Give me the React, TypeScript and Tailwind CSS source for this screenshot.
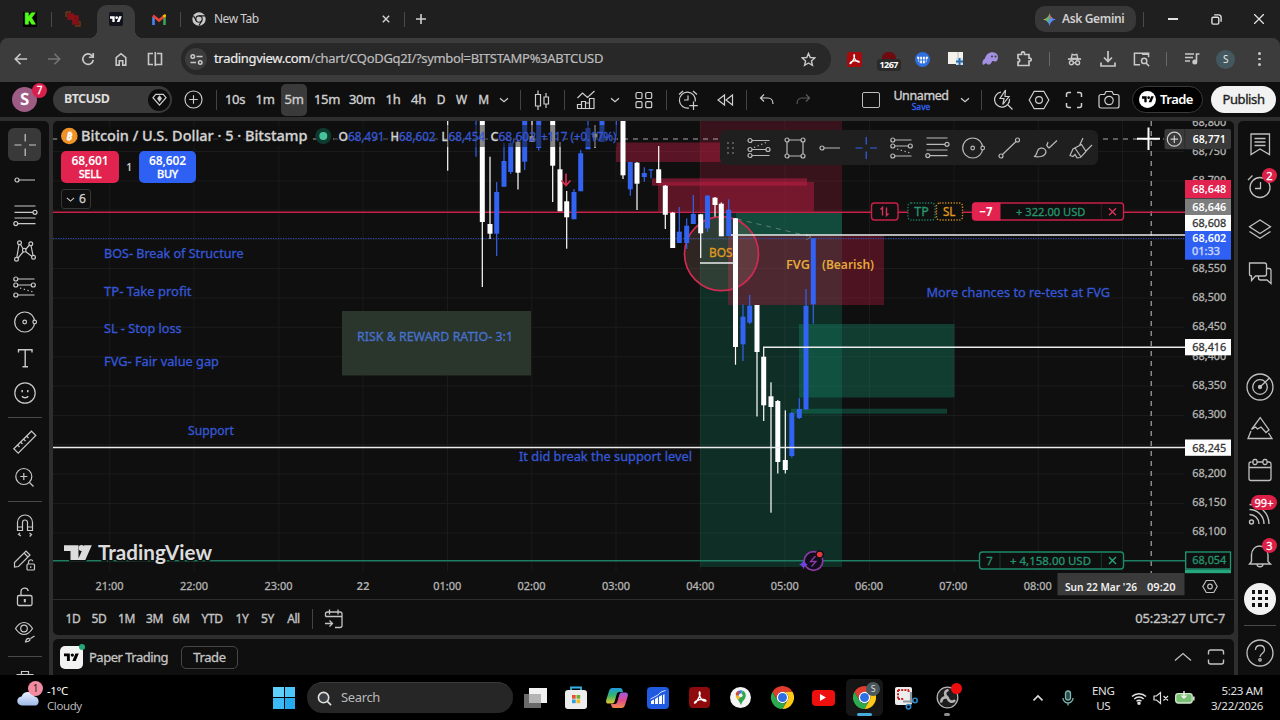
import React from 'react';

const UI = 'font-["Noto_Sans","Open_Sans",sans-serif]';

// [x, bodyTop, bodyBottom, wickTop, wickBottom, up]
const candles: [number, number, number, number, number, number][] = [
    [447.7, 121, 121, 121, 170.7, 0],
    [476, 121, 121, 121, 156.7, 1],
    [482.3, 121, 222, 121, 287, 0],
    [490, 224, 233.7, 156.7, 239, 0],
    [496.7, 192, 233.7, 182, 256, 1],
    [504, 161, 186.7, 143, 187, 1],
    [510.7, 143, 172, 140, 174, 1],
    [518, 141.7, 172.7, 140, 189.5, 0],
    [524.7, 121, 161.7, 121, 170, 1],
    [532, 136, 142, 121, 142, 0],
    [538.7, 121, 148, 121, 150.5, 1],
    [552.7, 121, 165.7, 121, 202, 0],
    [560, 169.3, 211.3, 142, 211, 0],
    [566.7, 201.3, 217.3, 191, 248.7, 0],
    [574, 192, 219.3, 189, 219, 1],
    [580.7, 153.3, 191.3, 150, 191, 1],
    [588, 128, 149.3, 121, 149, 1],
    [595, 133.5, 137.5, 125, 148, 0],
    [602, 121, 142, 121, 142, 1],
    [616.3, 121, 121, 121, 136, 1],
    [623, 121, 175.3, 121, 179, 0],
    [630.3, 162, 189.3, 162, 195.7, 1],
    [637, 162.7, 183.7, 162, 210, 0],
    [644.3, 173, 177, 167.3, 181.7, 1],
    [651, 169.3, 170.5, 169, 178.3, 1],
    [658.7, 169.3, 183, 146, 183, 0],
    [665.3, 185.7, 214.7, 185, 229, 0],
    [672.7, 212.7, 248, 212, 248, 0],
    [679.3, 231.7, 243, 207, 243, 1],
    [686.7, 225.7, 243, 218.3, 249, 1],
    [693.3, 214, 224, 195, 224, 1],
    [700.7, 214.3, 233.3, 214, 258, 0],
    [707.5, 195.7, 228.3, 195, 231.7, 1],
    [715, 197.7, 205, 197, 216.7, 0],
    [721.3, 203.7, 236.3, 202.5, 236, 0],
    [728.7, 209.7, 236, 199.3, 236, 1],
    [735.5, 218.3, 347, 218, 364.7, 0],
    [743, 316.7, 344.3, 304.5, 361, 1],
    [749.7, 305.7, 322.7, 295, 324, 1],
    [757, 305, 352, 305, 416.5, 0],
    [763.7, 356.7, 405.3, 347, 421, 0],
    [771, 396.3, 407, 382.3, 512.7, 0],
    [777.8, 401, 462, 400, 473.5, 0],
    [785.3, 460, 470, 410.3, 473.5, 0],
    [791.8, 413, 456, 412, 457.7, 1],
    [799.3, 409, 418, 398, 419, 1],
    [806, 305.8, 409.3, 289, 410, 1],
    [813.3, 238.3, 304.3, 238, 323.7, 1],
];

const gridX = [109.7, 194, 278.8, 363, 447.5, 531.7, 616, 700.3, 785, 869.5, 954, 1038.3, 1122.5];
const gridY = [151.5, 181, 210, 239.5, 268.5, 298, 327.3, 356.7, 386, 415.5, 444.7, 474, 503.5, 533];

const hours: [string, number][] = [
    ['21:00', 109.5], ['22:00', 194], ['23:00', 278.5], ['22', 363], ['01:00', 447.3], ['02:00', 531.5],
    ['03:00', 616], ['04:00', 700.3], ['05:00', 784.7], ['06:00', 869], ['07:00', 953.3], ['08:00', 1037.7],
];

const prices: [string, number][] = [
    ['68,800', 122], ['68,750', 151], ['68,700', 179.5], ['68,550', 268], ['68,500', 297], ['68,450', 326],
    ['68,400', 356], ['68,350', 385], ['68,300', 414], ['68,200', 473], ['68,150', 502], ['68,100', 531],
];

type IcoProps = { children: React.ReactNode; className?: string; box?: number; sw?: number };

const Ico = ({ children, className = 'size-7', box = 28, sw = 1.2 }: IcoProps) => (
    <svg viewBox={`0 0 ${box} ${box}`} className={`${className} shrink-0`} fill="none" stroke="currentColor" strokeWidth={sw}>
        {children}
    </svg>
);

const TvMark = ({ className = '' }: { className?: string }) => (
    <svg viewBox="0 3 36 20" className={className} fill="currentColor">
        <path d="M14 22H7V11H0V4h14v18zM28 22h-8l7.5-18h8L28 22z" />
        <circle cx="20" cy="8" r="4" />
    </svg>
);

const Slot = ({ w, children }: { w: string; children?: React.ReactNode }) => (
    <div className={`${w} shrink-0 flex items-center justify-center`}>{children}</div>
);

const Chevron = ({ className = 'size-[10px]' }: { className?: string }) => (
    <Ico box={10} className={className}><path d="M1 3.2l4 3.6 4-3.6" /></Ico>
);

const FibIcon = () => (
    <Ico>
        <path d="M3.5 4h21M3.5 10.3H22M3.5 16h21M7 21.6h17.5" />
        <circle cx="24" cy="10.3" r="2" />
        <circle cx="4.8" cy="21.6" r="2" />
    </Ico>
);

const ProjIcon = () => (
    <Ico>
        <path d="M7 6h16.5M7 12h13M7 22h16.5" />
        <circle cx="4.8" cy="6" r="2" />
        <circle cx="4.8" cy="12" r="2" />
        <circle cx="22.3" cy="12" r="2" />
        <circle cx="4.8" cy="22" r="2" />
        <path d="M9 15l15 4.500" strokeDasharray="1.3 2.6" />
    </Ico>
);

const CircleIcon = () => (
    <Ico>
        <circle cx="13.7" cy="14" r="10" />
        <circle cx="13.7" cy="14" r="1.8" />
        <circle cx="23.7" cy="14" r="1.8" fill="#151515" />
    </Ico>
);

const CrossIcon = () => (
    <Ico><path d="M3.5 14h7M18 14h7M14.2 3v7.5M14.2 17.5V25" /></Ico>
);

const RayIcon = () => (
    <Ico><circle cx="6" cy="14" r="2" /><path d="M8 14h16" /></Ico>
);

const Hexagon = ({ className = 'size-7' }: { className?: string }) => (
    <Ico className={className}>
        <path d="M9.2 5.3h9.6L23.8 14l-5 8.7H9.2L4.2 14z" />
        <circle cx="14" cy="14" r="3.4" />
    </Ico>
);

const ChromeLogo = ({ className = '' }: { className?: string }) => (
    <svg viewBox="0 0 48 48" className={className}>
        <path d="M24 12h20.78A24 24 0 0 0 3.22 12L13.6 30A12 12 0 0 1 24 12z" fill="#e33b2e" />
        <path d="M34.4 30L24 48A24 24 0 0 1 3.2 12l10.4 18a12 12 0 0 0 20.8 0z" fill="#2da94f" />
        <path d="M24 12h20.8A24 24 0 0 1 24 48l10.4-18A12 12 0 0 0 24 12z" fill="#fdc914" />
        <circle cx="24" cy="24" r="12" fill="#fff" />
        <circle cx="24" cy="24" r="9.3" fill="#2f6fe4" />
    </svg>
);

type LabelProps = { x: number; y: number; w?: number; size?: number; weight?: number; fill?: string; mid?: boolean; children: string };

const Label = ({ x, y, w, size = 12, weight = 400, fill = '#3557d6', mid, children }: LabelProps) => (
    <text x={x} y={y} fontSize={size} fontWeight={weight} fill={fill} textAnchor={mid ? 'middle' : 'start'}
        stroke={fill} strokeWidth={weight > 500 ? 0 : 0.3} textLength={w} lengthAdjust="spacingAndGlyphs">
        {children}
    </text>
);

const TabStrip = () => (
    <div className="h-[38px] shrink-0 flex items-end bg-[#1f1f1f] text-[#d0d0d0]">
        <div className="h-[38px] flex items-center w-[97px]">
            <div className="ml-[23px] w-[14px] h-[15px] bg-black flex items-center justify-center text-[#53fc18] font-['Inter'] font-black text-[14px] leading-none [-webkit-text-stroke:0.8px]">K</div>
            <div className="ml-[14px] w-px h-[15px] bg-[#4a4a4a]" />
            <Ico box={16} className="ml-[13px] size-[16px] text-[#8c1218]" sw={1.4}>
                <path d="M1 1h5M1 1v5M15 10v5h-5" stroke="#6b3a18" />
                <path d="M3 3h5v5H3zM7 5h6v8H8V8z" fill="#7d0f14" />
                <path d="M5 5l6 6" />
            </Ico>
        </div>
        <div className="relative w-[38px] h-[33px] rounded-t-[10px] bg-[#3c3c3c] flex justify-center">
            <div className="absolute -left-[8px] bottom-0 size-[8px] bg-[radial-gradient(circle_at_0_0,transparent_8px,#3c3c3c_8px)]" />
            <div className="absolute -right-[8px] bottom-0 size-[8px] bg-[radial-gradient(circle_at_8px_0,transparent_8px,#3c3c3c_8px)]" />
            <div className="mt-[7px] size-[14px] rounded-[2px] bg-[#10131c] flex items-center justify-center">
                <TvMark className="w-[12px] text-white" />
            </div>
        </div>
        <div className="h-[38px] flex-1 flex items-center">
            <svg viewBox="0 0 14 11" className="ml-[17px] w-[14px] h-[11px]" fill="none" strokeWidth="2.6">
                <path d="M1.5 3v8" stroke="#4285f4" />
                <path d="M12.5 3v8" stroke="#34a853" />
                <path d="M1 1.5l6 5 6-5" stroke="#ea4335" />
                <path d="M11.2 2.8L13.8 1" stroke="#fbbc04" />
            </svg>
            <div className="ml-[14px] w-px h-[15px] bg-[#4a4a4a]" />
            <svg viewBox="0 0 48 48" className="ml-[11px] size-[14px]">
                <circle cx="24" cy="24" r="23" fill="#c9c9c9" />
                <circle cx="24" cy="24" r="11" fill="none" stroke="#1f1f1f" strokeWidth="4" />
                <path d="M24 13h21M14.5 29.500L5 13M33.500 29.500L24 46" stroke="#1f1f1f" strokeWidth="4" />
            </svg>
            <span className="ml-[8px] w-[43px] text-[12px] tracking-[-0.5px] whitespace-nowrap">New Tab</span>
            <Ico box={10} className="ml-[125px] size-[8px]" sw={1.8}><path d="M1 1l8 8M9 1L1 9" /></Ico>
            <div className="ml-[14px] w-px h-[15px] bg-[#4a4a4a]" />
            <Ico box={10} className="ml-[11px] size-[10px]" sw={1.6}><path d="M5 0v10M0 5h10" /></Ico>
            <div className="ml-auto mr-[7px] w-[101px] h-[26px] rounded-[10px] bg-[#383838] flex items-center">
                <svg viewBox="0 0 14 14" className="ml-[8px] size-[13px]">
                    <defs>
                        <linearGradient id="gem" x1="0" y1="0.3" x2="1" y2="0.7">
                            <stop offset="0.1" stopColor="#f2b632" />
                            <stop offset="0.35" stopColor="#5bb974" />
                            <stop offset="0.6" stopColor="#5a8df5" />
                            <stop offset="1" stopColor="#4a7df0" />
                        </linearGradient>
                    </defs>
                    <path d="M7 0c.8 4 3 6.200 7 7-4 .8-6.200 3-7 7-.8-4-3-6.200-7-7 4-.8 6.200-3 7-7z" fill="url(#gem)" />
                    <path d="M7 0c.5 2.500 1.500 4.200 3 5.300L7 6.500z" fill="#e2604f" />
                </svg>
                <span className="ml-[6px] text-[12px] font-semibold tracking-[-0.35px] whitespace-nowrap">Ask Gemini</span>
            </div>
            <div className="w-px h-[15px] bg-[#4a4a4a]" />
            <div className="ml-[24px] w-[10px] h-[1.500px] bg-[#e0e0e0]" />
            <Ico box={12} className="ml-[33px] size-[11px] text-[#e0e0e0]" sw={1.5}>
                <rect x="1" y="3.500" width="7.500" height="7.500" rx="1.500" />
                <path d="M3.500 1h5A2.500 2.500 0 0 1 11 3.500v5" />
            </Ico>
            <Ico box={10} className="ml-[32px] mr-[16px] size-[10px] text-[#e0e0e0]" sw={1.3}><path d="M0 0l10 10M10 0L0 10" /></Ico>
        </div>
    </div>
);

const AddressBar = () => (
    <div className="h-[44px] shrink-0 bg-[#1f1f1f]">
        <div className="h-full rounded-t-[8px] bg-[#3c3c3c] flex items-center pb-[2px] text-[#c8c8c8]">
            <div className="ml-[4px] w-[177px] flex">
                <Slot w="w-[33.5px]"><Ico box={16} className="size-[14px]" sw={1.9}><path d="M15 8H2M7.500 2L1.500 8l6 6" /></Ico></Slot>
                <Slot w="w-[33.5px]"><Ico box={16} className="size-[14px] text-[#747474]" sw={1.9}><path d="M1 8h13M8.500 2l6 6-6 6" /></Ico></Slot>
                <Slot w="w-[33.5px]"><Ico box={16} className="size-[14px]" sw={1.9}><path d="M14 9a6 6 0 1 1-1.800-5.200L14 5.500M14 1v5H9" /></Ico></Slot>
                <Slot w="w-[33.5px]"><Ico box={16} className="size-[14px]" sw={1.8}><path d="M2.500 6.500L8 2l5.500 4.500V15H10v-5H6v5H2.500z" /></Ico></Slot>
                <Slot w="w-[33.5px]">
                    <Ico box={16} className="size-[16px]" sw={1.6}><path d="M6 2.500H1.500v11H6M8.300 1v14M10 2.500h4.500v11H8.500" /></Ico>
                </Slot>
            </div>
            <div className="w-[650px] h-[32px] rounded-full bg-[#282828] flex items-center">
                <div className="ml-[4px] size-[22px] rounded-full bg-[#3c3c3c] flex items-center justify-center">
                    <Ico box={14} className="size-[13px]" sw={1.600}>
                        <circle cx="3" cy="3.700" r="1.900" /><path d="M7 3.700h6.500M.5 10.300h6" /><circle cx="11" cy="10.300" r="1.900" />
                    </Ico>
                </div>
                <span className="ml-[7px] text-[13px] tracking-[-0.32px] text-[#bcbcbc] whitespace-nowrap [-webkit-text-stroke:0.2px]">
                    <span className="text-[#ececec]">tradingview.com</span>/chart/CQoDGq2I/?symbol=BITSTAMP%3ABTCUSD
                </span>
                <Ico box={16} className="ml-auto mr-[15px] size-[15px]" sw={1.5}><path d="M8 1.500l1.900 4.400 4.800.4-3.600 3.200 1.100 4.700L8 11.700l-4.200 2.500 1.100-4.700L1.300 6.300l4.800-.4z" /></Ico>
            </div>
            <div className="ml-[7px] flex items-center">
                <Slot w="w-[33.8px]">
                    <div className="size-[15px] rounded-[2px] bg-[#a80a0e] flex items-center justify-center text-white">
                        <Ico box={16} className="size-[13px]" sw={1.500}><path d="M7.700 2c-.8 0-.5 3 .6 5.200C9.500 9.500 12 11.500 14 11c0-1.500-4-2-6.500-1.300C5 10.300 2.500 12 2.500 13 4 14 9.500 4 7.700 2z" /></Ico>
                    </div>
                </Slot>
                <Slot w="w-[33.8px]">
                    <div className="flex flex-col items-center mt-[4px]">
                        <div className="w-[14px] h-[7px] rounded-t-[6px] bg-[#6e0a10]" />
                        <div className="w-[24px] h-[12px] rounded-[3px] bg-[#2a2a2a] text-white text-[9px] font-bold leading-[12px] tracking-[-0.5px] text-center">1267</div>
                    </div>
                </Slot>
                <Slot w="w-[33.8px]">
                    <svg viewBox="0 0 16 16" className="size-[15px]">
                        <circle cx="8" cy="8" r="8" fill="#2f6fe0" />
                        <path d="M2 5h12l-1 3H3zM3 9h10l-2 3H5z" fill="#fff" />
                        <path d="M5 4v8M8 4v8M11 4v8" stroke="#2f6fe0" />
                    </svg>
                </Slot>
                <Slot w="w-[33.8px]">
                    <svg viewBox="0 0 16 14" className="w-[16px] h-[14px]">
                        <rect width="15" height="12" fill="#f4f1ea" />
                        <path d="M10 0v12" stroke="#b8b8b8" />
                        <rect x="8" y="6" width="7" height="7" fill="#cfe0ef" />
                        <path d="M11.500 6v7M8 9.500h7" stroke="#2b6ca8" strokeWidth="2" />
                    </svg>
                </Slot>
                <Slot w="w-[33.8px]">
                    <svg viewBox="0 0 16 14" className="w-[16px] h-[14px]">
                        <path d="M1 13c-1.500-3 0-5 2-6.500C4 2.500 7 0 11 .3c3 .2 5 2 5 5 0 3-1.500 4.500-3 4.200-1.500 0-2-1-3 0-1 2.500-2.500 3.500-4 3-1.500-.5-1-1.700-2-1.200z" fill="#a390e0" />
                        <circle cx="10" cy="4.500" r="1" fill="#3c3c3c" /><circle cx="13.500" cy="4.500" r="1" fill="#3c3c3c" />
                    </svg>
                </Slot>
                <Slot w="w-[33.8px]">
                    <Ico box={16} className="size-[16px]" sw={1.700}><path d="M2 3.500h3.500V2.300a1.500 1.500 0 0 1 3 0v1.200H13v3.700h.8a1.400 1.400 0 0 1 0 2.800H13v4.500H2v-3.500c2.200 0 2.200-3.500 0-3.500z" /></Ico>
                </Slot>
                <Slot w="w-[16.500px]"><div className="w-px h-[14px] bg-[#686868]" /></Slot>
                <Slot w="w-[33.8px]">
                    <Ico box={16} className="size-[15px]" sw={1.500}><path d="M1 7.500h14" strokeWidth="1.800" /><path d="M4.500 7L5.500 2.500 8 3.200l2.500-.7 1 4.500z" /><circle cx="4.700" cy="11.500" r="2.100" /><circle cx="11.300" cy="11.500" r="2.100" /><path d="M6.800 11.500h2.400" /></Ico>
                </Slot>
                <Slot w="w-[33.8px]"><Ico box={16} className="size-[16px]" sw={1.700}><path d="M8 0v10M4 6.500L8 10.500l4-4M1 11.500V15h14v-3.500" /></Ico></Slot>
                <Slot w="w-[33.8px]">
                    <Ico box={18} className="size-[17px]" sw={1.600}><path d="M7.500 14.500H1.500v-12h15v4M16.500 3.500h-7" /><circle cx="11.800" cy="10.500" r="2.800" /><path d="M13.800 12.700l3.200 3.300" /></Ico>
                </Slot>
                <Slot w="w-[16.500px]"><div className="w-px h-[14px] bg-[#686868]" /></Slot>
                <Slot w="w-[33.8px]">
                    <Ico box={16} className="size-[16px]" sw={1.600}><path d="M1 3h9M1 6.500h8M1 10h5" /><path d="M15.500 3h-3v7.500" /><circle cx="10.800" cy="11" r="1.700" fill="currentColor" /></Ico>
                </Slot>
                <Slot w="w-[33.8px]"><div className="size-[19px] rounded-full bg-[#44595f] text-[10px] leading-[19px] text-center text-[#e8e8e8]">S</div></Slot>
                <Slot w="w-[33.8px]">
                    <div className="flex flex-col gap-[3px]">
                        <div className="size-[2.500px] rounded-full bg-[#c8c8c8]" /><div className="size-[2.500px] rounded-full bg-[#c8c8c8]" /><div className="size-[2.500px] rounded-full bg-[#c8c8c8]" />
                    </div>
                </Slot>
            </div>
        </div>
    </div>
);

const HDivider = () => <div className="w-px h-[20px] bg-[#434343]" />;

const ChartHeader = () => (
    <div className="h-[35px] shrink-0 flex items-center bg-[#0f0f0f] text-[#cfcfcf] text-[13px] tracking-[-0.3px] [-webkit-text-stroke:0.35px]">
        <div className="relative w-[53px] h-[35px] shrink-0">
            <div className="absolute left-[12px] top-[5px] size-[25px] rounded-full bg-[#9d5c83] text-white text-[16px] font-semibold leading-[25px] text-center">S</div>
            <div className="absolute left-[32px] top-[1px] size-[15px] rounded-full bg-[#d91f4c] text-white text-[10px] leading-[15px] text-center">7</div>
        </div>
        <div className="w-[119px] h-[27px] shrink-0 rounded-full bg-[#3a3a3a] flex items-center justify-between pl-[11px] pr-[2px]">
            <span className="text-[12.500px] font-bold tracking-[-0.600px] text-[#dedede] [-webkit-text-stroke:0px]">BTCUSD</span>
            <div className="size-[22px] rounded-full bg-[#0c0c0c] flex items-center justify-center">
                <Ico box={16} className="size-[15px]" sw={1.300}><path d="M4 2.500h8L15 6l-7 8L1 6z" /><path d="M8 4.500L9.800 7 8 9.500 6.200 7z" fill="currentColor" /></Ico>
            </div>
        </div>
        <Slot w="w-[42px]"><Ico box={20} className="size-[19px]"><circle cx="10" cy="10" r="9" /><path d="M10 5.500v9M5.500 10h9" /></Ico></Slot>
        <Slot w="w-[4px]"><HDivider /></Slot>
        <Slot w="w-[34px]">10s</Slot>
        <Slot w="w-[26px]">1m</Slot>
        <Slot w="w-[32px]"><div className="w-[26px] h-[32px] rounded-[5px] bg-[#3a3a3a] flex items-center justify-center">5m</div></Slot>
        <Slot w="w-[34px]">15m</Slot>
        <Slot w="w-[36px]">30m</Slot>
        <Slot w="w-[26px]">1h</Slot>
        <Slot w="w-[25px]">4h</Slot>
        <Slot w="w-[20px]"><span className="text-[12px]">D</span></Slot>
        <Slot w="w-[21px]"><span className="text-[12px]">W</span></Slot>
        <Slot w="w-[23px]"><span className="text-[12px]">M</span></Slot>
        <Slot w="w-[18px]"><Chevron /></Slot>
        <Slot w="w-[14px]"><HDivider /></Slot>
        <Slot w="w-[30px]">
            <Ico><path d="M10 4.500v4M10 20v4M7.500 8.500h5V20h-5zM18 7v4M18 18v4M16 11h4.500v7H16z" /></Ico>
        </Slot>
        <Slot w="w-[14px]"><HDivider /></Slot>
        <Slot w="w-[30px]">
            <Ico><path d="M5.500 12l5-5 5 4.500L22.500 5M5.500 22.500v-4h4v4zM9.500 22.500v-7h4v7M13.500 22.500V17h4v5.500M17.500 22.500v-10H22v10zM5 22.500h17" /></Ico>
        </Slot>
        <Slot w="w-[28px]"><Chevron /></Slot>
        <Slot w="w-[30px]">
            <Ico><rect x="6" y="6.500" width="6" height="6" rx="1.300" /><rect x="15.700" y="6.500" width="6" height="6" rx="1.300" /><rect x="6" y="15.700" width="6" height="6" rx="1.300" /><rect x="15.700" y="15.700" width="6" height="6" rx="1.300" /></Ico>
        </Slot>
        <Slot w="w-[14px]"><HDivider /></Slot>
        <Slot w="w-[30px]">
            <Ico><path d="M15 22a8 8 0 1 1 6.300-6.500M14 9.500V14h-4M5 8.500l4-3.500M23 8.500L19 5M19.500 15.500v8.500M15.300 19.700h8.500" /></Ico>
        </Slot>
        <Slot w="w-[43px]"><Ico><path d="M13.500 9v10L7 14zM21.500 9v10L15 14z" /></Ico></Slot>
        <div className="w-px h-[20px] bg-[#434343]" />
        <Slot w="w-[40px]"><Ico><path d="M11 8.500L7.500 12l3.500 3.500M7.500 12H15c3 0 5 2.500 5 6" /></Ico></Slot>
        <Slot w="w-[32px]"><Ico className="size-7 text-[#5c5c5c]"><path d="M17 8.500L20.500 12 17 15.500M20.500 12H13c-3 0-5 2.500-5 6" /></Ico></Slot>
        <div className="w-[33px] shrink-0" />
        <Slot w="w-[38px]"><div className="w-[18px] h-[16px] border-[1.500px] border-[#bdbdbd] rounded-[2px]" /></Slot>
        <Slot w="w-[62px]">
            <div className="flex flex-col items-center leading-none mt-[2px]">
                <span className="text-[12.500px] leading-[13px] tracking-[-0.400px]">Unnamed</span>
                <span className="text-[8.500px] leading-[10px] tracking-normal text-[#3263f0]">Save</span>
            </div>
        </Slot>
        <Slot w="w-[26px]"><Chevron /></Slot>
        <Slot w="w-[6px]"><HDivider /></Slot>
        <Slot w="w-[38px]">
            <Ico><path d="M12 6.200a7.500 7.500 0 1 0 8.500 6.500M18.500 18.500l5 5M16.500 4L11 12.500h4l-1.200 6 6.200-8h-4z" /></Ico>
        </Slot>
        <Slot w="w-[33px]"><Hexagon /></Slot>
        <Slot w="w-[38px]">
            <Ico sw={1.500}><path d="M6.500 11V8.500a2 2 0 0 1 2-2H11M17 6.500h2.500a2 2 0 0 1 2 2V11M21.500 17v2.500a2 2 0 0 1-2 2H17M11 21.500H8.500a2 2 0 0 1-2-2V17" /></Ico>
        </Slot>
        <Slot w="w-[32px]">
            <Ico><path d="M6 8.500h3.500l1.500-3h6l1.500 3H22a2 2 0 0 1 2 2V20a2 2 0 0 1-2 2H6a2 2 0 0 1-2-2v-9.500a2 2 0 0 1 2-2z" /><circle cx="14" cy="14.500" r="4.200" /></Ico>
        </Slot>
        <div className="ml-[7px] w-[71px] h-[27px] shrink-0 rounded-full bg-black border border-[#3a3a3a] flex items-center pl-[6px]">
            <div className="size-[17px] rounded-full bg-white flex items-center justify-center"><TvMark className="w-[12px] text-black" /></div>
            <span className="ml-[4px] text-[13px] font-semibold tracking-[-0.5px] text-white [-webkit-text-stroke:0px]">Trade</span>
        </div>
        <div className="ml-[8px] w-[65px] h-[27px] shrink-0 rounded-full bg-[#f2f2f2] text-[#222] text-center leading-[26px] tracking-[-0.400px]">Publish</div>
    </div>
);

const ToolSlot = ({ children }: { children: React.ReactNode }) => (
    <div className="h-[35.500px] shrink-0 flex items-center justify-center">{children}</div>
);

const ToolDivider = () => <div className="mx-auto my-[6px] w-[34px] h-px shrink-0 bg-[#4a4a4a]" />;

const LeftTools = () => (
    <div className="w-[49px] shrink-0 rounded-tr-[5px] bg-[#0f0f0f] pt-[6px] flex flex-col overflow-hidden text-[#c9c9c9]">
        <ToolSlot><div className="w-[33px] h-[33px] rounded-[6px] bg-[#393939] flex items-center justify-center"><CrossIcon /></div></ToolSlot>
        <ToolSlot><RayIcon /></ToolSlot>
        <ToolSlot><FibIcon /></ToolSlot>
        <ToolSlot>
            <Ico>
                <path d="M5.800 20.500L8 7.500M9.500 7.500L12.300 12M14.500 12.500l4-4.500M20 8.500l2 10M7 21l5.500-6.500M14.500 14.500l6.500 5" />
                <circle cx="8.500" cy="5.800" r="1.900" /><circle cx="19.800" cy="6.700" r="1.900" /><circle cx="13.200" cy="13.200" r="1.800" /><circle cx="5.500" cy="22.300" r="1.900" /><circle cx="22.500" cy="20.300" r="1.900" />
            </Ico>
        </ToolSlot>
        <ToolSlot><ProjIcon /></ToolSlot>
        <ToolSlot><CircleIcon /></ToolSlot>
        <ToolSlot><Ico sw={1.400}><path d="M7.500 8.500V5.700h13.500v2.800M14.200 5.700v17M11.500 22.700H17" /></Ico></ToolSlot>
        <ToolSlot>
            <Ico><circle cx="14" cy="14" r="10.200" /><path d="M11 17.200c1.500 2 4.700 2 6.200 0M11.200 11v2.200M16.800 11v2.200" strokeWidth="1.500" /></Ico>
        </ToolSlot>
        <ToolDivider />
        <ToolSlot>
            <Ico><path d="M2.800 20.700L20.500 3.200l4.300 4.300L7.200 25.200zM6.500 17l2 2M9.500 14l2 2M12.500 11l2 2M15.500 8l2 2" /></Ico>
        </ToolSlot>
        <ToolSlot><Ico><circle cx="12.800" cy="13.500" r="8" /><path d="M18.500 19.500l4 4M12.800 10v7M9.300 13.500h7" /></Ico></ToolSlot>
        <ToolDivider />
        <ToolSlot>
            <Ico><path d="M6.500 18.500v-8a7.500 7.500 0 0 1 15 0v8h-5v-8a2.500 2.500 0 0 0-5 0v8zM6.500 15h5M16.500 15h5M9 21l-1.500 1.500L10 24M18.500 21l2 1.500-1.800 2" /></Ico>
        </ToolSlot>
        <ToolSlot>
            <Ico>
                <path d="M3.500 15.500L15 4l4 4L7.500 19.500l-4 .5zM13 6l4 4" />
                <rect x="16" y="17" width="7.500" height="6" rx="1" /><path d="M17.500 17v-2a2.200 2.200 0 0 1 4.300-.7M19.700 19.300v1.600" />
            </Ico>
        </ToolSlot>
        <ToolSlot>
            <Ico sw={1.300}><rect x="6.500" y="12.500" width="14.500" height="10" rx="1.500" /><path d="M10 12.500V8.700a3.700 3.700 0 0 1 7.300-.7" /><path d="M13.800 16v3.300" strokeWidth="2" /></Ico>
        </ToolSlot>
        <ToolSlot>
            <Ico>
                <path d="M4.500 10.500C7 6.500 10 4.500 13 4.500s6 2 8.500 6c-2.500 4-5.500 6-8.500 6s-6-2-8.500-6z" /><circle cx="13" cy="10.500" r="3.300" />
                <path d="M14.500 24c.5-2 1-4 3.500-3.500 2 .5 1 3.500-3.500 3.500zM19.500 20.500L23.500 18" />
            </Ico>
        </ToolSlot>
        <ToolDivider />
        <ToolSlot><Ico><path d="M5.500 7.500h17M10.500 7.500V4.500h7v3M8 8v14.500h12V8" /></Ico></ToolSlot>
    </div>
);

const FloatSlot = ({ children }: { children: React.ReactNode }) => (
    <div className="w-[35.700px] shrink-0 flex items-center justify-center">{children}</div>
);

// drawing favourites bar that floats over the chart
const FloatingBar = () => (
    <div className="absolute left-[667px] top-[9px] w-[378px] h-[35px] rounded-[6px] bg-[#1f1f1f] flex items-center text-[#b9b9b9]">
        <div className="w-[22px] flex justify-center">
            <svg viewBox="0 0 8 12" className="w-[8px] h-[12px]" fill="#565656">
                {[0, 5, 10].map(y => <React.Fragment key={y}><rect x="0" y={y} width="2" height="2" /><rect x="5" y={y} width="2" height="2" /></React.Fragment>)}
            </svg>
        </div>
        <FloatSlot>
            <Ico>
                <path d="M7 6.500h17.500M7 15.500h14M7 21.500h17.500" /><circle cx="5" cy="6.500" r="2" /><circle cx="5" cy="15.500" r="2" /><circle cx="23" cy="15.500" r="2" /><circle cx="5" cy="21.500" r="2" />
                <path d="M9 13.500l13-5.500" strokeDasharray="1.300 2.600" />
            </Ico>
        </FloatSlot>
        <FloatSlot>
            <Ico><path d="M8 6h12M8 22h12M6 8v12M22 8v12" /><circle cx="6" cy="6" r="2" /><circle cx="22" cy="6" r="2" /><circle cx="6" cy="22" r="2" /><circle cx="22" cy="22" r="2" /></Ico>
        </FloatSlot>
        <FloatSlot><RayIcon /></FloatSlot>
        <FloatSlot><div className="text-[#3263f0]"><CrossIcon /></div></FloatSlot>
        <FloatSlot><ProjIcon /></FloatSlot>
        <FloatSlot><FibIcon /></FloatSlot>
        <FloatSlot><CircleIcon /></FloatSlot>
        <FloatSlot><Ico><circle cx="6" cy="22" r="2" /><circle cx="22.500" cy="6" r="2" /><path d="M7.500 20.500L21 7.500" /></Ico></FloatSlot>
        <FloatSlot>
            <Ico><path d="M4 22.500c2.500-.5 2.500-3 3.500-5.500 1-3 5.500-4 7.500-1.500 2.500 3-.5 6.500-4 7-2.500.5-5 .500-7 0zM16.500 10.500c.5 2 1 2.500 2.500 3.500M17 11l1-3M19 14l8-7.500" /></Ico>
        </FloatSlot>
        <FloatSlot>
            <Ico><path d="M4 21.500L7 15l8.500-4.500 4.500 7-5.500 6-3.500.3-2-3.300-2 2zM9 14l6 9M13.500 11.500L17 4M20 17l6-6" /></Ico>
        </FloatSlot>
    </div>
);

const Chart = () => (
    <svg viewBox="53 121 1181 479" className="block w-[1181px] h-[479px]" fontFamily='"Noto Sans", "Open Sans", sans-serif'>
        <g stroke="#1b1b1b" strokeWidth="1">
            {gridX.map(x => <line key={x} x1={x} x2={x} y1="121" y2="571" />)}
            {gridY.map(y => <line key={y} x1="53" x2="1184" y1={y} y2={y} />)}
        </g>

        {/* short position and supply / demand zones */}
        <rect x="700" y="121" width="142" height="91" fill="#e2224f" fillOpacity="0.2" />
        <rect x="700" y="213" width="142" height="354" fill="#14a079" fillOpacity="0.22" />
        <rect x="736" y="213" width="106" height="22" fill="#1aa57c" fillOpacity="0.25" />
        <rect x="616" y="142.500" width="150" height="19.500" fill="#c81e46" fillOpacity="0.4" />
        <rect x="652" y="178.300" width="155" height="7.400" fill="#c81e46" fillOpacity="0.5" />
        <rect x="658" y="182" width="156" height="29.500" fill="#c81e46" fillOpacity="0.42" />
        <rect x="728" y="236" width="156" height="69" fill="#c81e46" fillOpacity="0.34" />
        <rect x="799" y="324" width="155.500" height="73.500" fill="#17a37b" fillOpacity="0.31" />
        <rect x="791" y="408.700" width="156" height="5" fill="#17a37b" fillOpacity="0.31" />
        <rect x="342" y="311" width="189" height="64.500" fill="#2a352c" />

        <line x1="53" x2="1185" y1="238.500" y2="238.500" stroke="#2c4fc0" strokeWidth="1" strokeDasharray="1.200 1.300" />
        <line x1="53" x2="1164" y1="139" y2="139" stroke="#a9a9a9" strokeWidth="1" strokeDasharray="5 5" />
        <line x1="1151.200" x2="1151.200" y1="121" y2="573" stroke="#a9a9a9" strokeWidth="1.200" strokeDasharray="5 5" />
        <line x1="737" x2="808" y1="219" y2="236" stroke="#5f7d70" strokeWidth="1" strokeDasharray="5 5" />
        <path d="M806 234l5 3-5 3" fill="none" stroke="#5f7d70" />
        <line x1="53" x2="1185" y1="212.200" y2="212.200" stroke="#c92148" strokeWidth="1.500" />
        <line x1="53" x2="1185" y1="560.800" y2="560.800" stroke="#1f7d63" strokeWidth="1.500" />
        <circle cx="721.500" cy="253.700" r="37" fill="#b08474" fillOpacity="0.2" stroke="#d22a50" strokeWidth="1.700" />

        <Label x={709} y={256.500} w={23.500} fill="#e09a1e">BOS</Label>

        {candles.map(([x, top, bottom, wt, wb, up]) => (
            <g key={x} fill={up ? '#3263f2' : '#ffffff'}>
                <rect x={x - 0.6} y={wt} width="1.200" height={wb - wt} />
                <rect x={x - 2.500} y={top} width="5" height={bottom - top} />
            </g>
        ))}

        <g stroke="#ececec" strokeWidth="1.400">
            <line x1="731" x2="1185" y1="235" y2="235" />
            <line x1="763" x2="1185" y1="347.300" y2="347.300" />
            <line x1="53" x2="1185" y1="447.500" y2="447.500" strokeWidth="1.700" />
            <line x1="700" x2="735" y1="263" y2="263" />
        </g>
        <path d="M566 173.500v12M561.500 180.500l4.500 5 4.500-5" fill="none" stroke="#d92a50" strokeWidth="1.700" />

        <Label x={786} y={268.500} w={24} weight={600} fill="#e5a83a">FVG</Label>
        <Label x={822} y={268.500} w={52} weight={600} fill="#e5a83a">(Bearish)</Label>
        <Label x={104} y={257.500} w={139.500}>BOS- Break of Structure</Label>
        <Label x={104} y={296} w={87.500}>TP- Take profit</Label>
        <Label x={104} y={332.700} w={77.500}>SL - Stop loss</Label>
        <Label x={104} y={365.700} w={115}>FVG- Fair value gap</Label>
        <Label x={188} y={434.700} w={46}>Support</Label>
        <Label x={519} y={461.200} w={173}>It did break the support level</Label>
        <Label x={926.500} y={297.300} w={183.500}>More chances to re-test at FVG</Label>
        <Label x={357} y={341} w={156} fill="#4672cc">RISK &amp; REWARD RATIO- 3:1</Label>

        {/* symbol legend */}
        <rect x="334" y="125" width="283" height="22" fill="#0f0f0f" fillOpacity="0.5" />
        <rect x="57" y="127" width="253" height="19" fill="#0f0f0f" fillOpacity="0.75" />
        <circle cx="69.300" cy="136" r="8.300" fill="#ef9327" />
        <text x="69.500" y="140" fontSize="10.500" fontWeight="800" fill="#fff" textAnchor="middle" transform="rotate(12 69.300 136)">₿</text>
        <Label x={81} y={141} w={226.500} size={14.500} weight={500} fill="#d2d2d2">Bitcoin / U.S. Dollar · 5 · Bitstamp</Label>
        <circle cx="323.300" cy="136" r="8" fill="#0f3a2f" />
        <circle cx="323.300" cy="136" r="4" fill="#45c49c" />
        <Label x={338.500} y={140.500} w={9.500} size={12} weight={500} fill="#d2d2d2">O</Label>
        <Label x={348} y={140.500} w={36.500} size={12}>68,491</Label>
        <Label x={390.500} y={140.500} w={8.500} size={12} weight={500} fill="#d2d2d2">H</Label>
        <Label x={399} y={140.500} w={36.500} size={12}>68,602</Label>
        <Label x={441.500} y={140.500} w={6} size={12} weight={500} fill="#d2d2d2">L</Label>
        <Label x={448.500} y={140.500} w={36.500} size={12}>68,454</Label>
        <Label x={490.500} y={140.500} w={8} size={12} weight={500} fill="#d2d2d2">C</Label>
        <Label x={498.500} y={140.500} w={37.500} size={12}>68,602</Label>
        <Label x={541} y={140.500} w={75.500} size={12}>+117 (+0.17%)</Label>

        {/* position pills */}
        <g fill="#0f0f0f" strokeWidth="1.400">
            <rect x="871.500" y="203" width="26.500" height="17" rx="3" stroke="#c92148" />
            <rect x="908" y="203" width="27" height="17" rx="3" stroke="#1f7d63" strokeDasharray="1.300 1.500" />
            <rect x="936.500" y="203" width="26" height="17" rx="3" stroke="#c98a1c" strokeDasharray="1.300 1.500" />
            <rect x="972.500" y="203" width="151" height="17" rx="3" stroke="#c92148" />
            <rect x="979.500" y="552" width="144" height="17" rx="3" stroke="#1f8a6b" />
        </g>
        <path d="M882.500 215.500v-8l-2 2M886.500 207.500v8l2-2" fill="none" stroke="#d8305a" strokeWidth="1.400" />
        <Label x={921.500} y={216} w={14.500} mid fill="#25966f">TP</Label>
        <Label x={949.200} y={216} w={12.500} mid fill="#e09a1e">SL</Label>
        <path d="M1000.500 202.500v18h-25a3 3 0 0 1-3-3v-12a3 3 0 0 1 3-3z" fill="#e2224f" />
        <Label x={986} y={216} w={13} mid weight={700} fill="#fff">−7</Label>
        <Label x={1016} y={215.500} w={69.500} size={11.500} fill="#25966f">+ 322.00 USD</Label>
        <line x1="1101.300" x2="1101.300" y1="204" y2="219" stroke="#3a1620" />
        <path d="M1109 208.200l7 7M1116 208.200l-7 7" stroke="#d8305a" strokeWidth="1.400" />
        <Label x={989.500} y={565} w={6.500} mid size={11.500} fill="#25966f">7</Label>
        <Label x={1010} y={565} w={81} size={11.500} fill="#25966f">+ 4,158.00 USD</Label>
        <path d="M1000 553v15M1101.300 553v15" stroke="#123b2f" />
        <path d="M1109 557l7 7M1116 557l-7 7" stroke="#25a67c" strokeWidth="1.400" />

        {/* event marker */}
        <circle cx="813.500" cy="561" r="9.300" fill="#120d1a" stroke="#8c3ba6" strokeWidth="1.700" />
        <path d="M815.500 556l-5 5.500h5.500l-4.500 5" fill="none" stroke="#8c3ba6" strokeWidth="1.300" />
        <path d="M803.500 559.500c.6 3 1.700 4.300 4.500 5-2.800.7-3.900 2-4.500 5-.6-3-1.700-4.300-4.500-5 2.800-.7 3.900-2 4.500-5z" fill="#6c45e0" />
        <circle cx="819.700" cy="554.500" r="4.200" fill="#120d1a" />
        <circle cx="819.700" cy="554.500" r="2.800" fill="#e63a3a" />

        {/* watermark with a dark outline */}
        <g fill="#dcdcdc" stroke="#0f0f0f" strokeWidth="3" paintOrder="stroke">
            <path d="M78.500 560h-8v-9h-6.500v-5.800h14.500zM85.300 560h-7.500l6.500-14.800h7.500z" />
        </g>
        <circle cx="81.500" cy="548" r="2.900" fill="#dcdcdc" />
        <text x="98" y="560" fontSize="20" fontWeight="700" fontFamily="Lato, sans-serif" fill="#dcdcdc" stroke="#0f0f0f" strokeWidth="3"
            paintOrder="stroke" textLength="114" lengthAdjust="spacingAndGlyphs">TradingView</text>

        {/* price axis */}
        {prices.map(([p, y]) => <Label key={p} x={1209.300} y={y + 4} w={34} mid size={11.500} fill="#b4b4b4">{p}</Label>)}
        <rect x="1164.500" y="129" width="66.500" height="20.200" rx="2" fill="#3a3a3a" />
        <line x1="1184.800" x2="1184.800" y1="129" y2="149" stroke="#2c2c2c" />
        <g fill="none" stroke="#d0d0d0" strokeWidth="1.200"><circle cx="1174.300" cy="139.200" r="7" /><path d="M1174.300 135.500v7.400M1170.600 139.200h7.400" /></g>
        <Label x={1209.300} y={143} w={33} mid size={11.500} weight={600} fill="#fff">68,771</Label>
        <rect x="1185" y="180" width="46" height="18" fill="#e2224f" />
        <Label x={1209.300} y={192.500} w={34} mid size={11.500} weight={600} fill="#fff">68,648</Label>
        <rect x="1185" y="198.500" width="46" height="17" fill="#7d7d7d" />
        <Label x={1209.300} y={210.500} w={34} mid size={11.500} weight={600} fill="#fff">68,646</Label>
        <rect x="1185" y="215" width="46" height="16" fill="#fff" />
        <Label x={1209.300} y={226.500} w={34} mid size={11.500} fill="#333">68,608</Label>
        <rect x="1185" y="231" width="46" height="28.700" fill="#2f60f4" />
        <Label x={1209.300} y={242.200} w={34} mid size={11.500} weight={600} fill="#fff">68,602</Label>
        <Label x={1206} y={255.300} w={28} mid size={11.500} weight={500} fill="#c8d5fb">01:33</Label>
        <rect x="1185" y="339" width="46" height="16.300" fill="#fff" />
        <Label x={1209.300} y={351} w={34} mid size={11.500} fill="#333">68,416</Label>
        <rect x="1185" y="439.500" width="46" height="16.300" fill="#fff" />
        <Label x={1209.300} y={451.500} w={34} mid size={11.500} fill="#333">68,245</Label>
        <rect x="1185.700" y="552" width="44.800" height="17" fill="#0f0f0f" stroke="#1f9a77" strokeWidth="1.300" />
        <rect x="1185" y="569.700" width="46" height="3.500" fill="#25a67c" />
        <Label x={1209.300} y={564} w={34} mid size={11.500} fill="#25966f">68,054</Label>

        <path d="M1137 138.800h23M1148.500 127.500V150" stroke="#fff" strokeWidth="2" />

        {/* time axis */}
        {hours.map(([t, x]) => <Label key={t} x={x} y={590} w={t === '22' ? 13 : 28} mid size={11.500} weight={t === '22' ? 600 : 400} fill="#b4b4b4">{t}</Label>)}
        <rect x="1057.500" y="573" width="127" height="22.300" fill="#3a3a3a" />
        <Label x={1065} y={591} w={72} size={11.500} weight={600} fill="#f0f0f0">Sun 22 Mar '26</Label>
        <Label x={1147} y={591} w={28.500} size={11.500} weight={600} fill="#f0f0f0">09:20</Label>
        <g fill="none" stroke="#bdbdbd" strokeWidth="1.200"><path d="M1206.300 580.500h7.400l3.500 6-3.500 6h-7.400l-3.500-6z" /><circle cx="1210" cy="586.500" r="2.300" /></g>
        <line x1="53" x2="1234" y1="599.500" y2="599.500" stroke="#2c2c2c" />
    </svg>
);

const RangeBar = () => (
    <div className="h-[35px] flex items-center pl-[7px] pt-[2px] text-[12px] tracking-[-0.4px] text-[#c4c4c4] [-webkit-text-stroke:0.35px]">
        <Slot w="w-[26px]">1D</Slot>
        <Slot w="w-[26px]">5D</Slot>
        <Slot w="w-[29px]">1M</Slot>
        <Slot w="w-[27px]">3M</Slot>
        <Slot w="w-[26px]">6M</Slot>
        <Slot w="w-[36px]">YTD</Slot>
        <Slot w="w-[24px]">1Y</Slot>
        <Slot w="w-[27px]">5Y</Slot>
        <Slot w="w-[25px]">All</Slot>
        <Slot w="w-[12px]"><HDivider /></Slot>
        <Slot w="w-[32px]">
            <Ico sw={1.300}><path d="M5.500 11.500V9a2 2 0 0 1 2-2H20a2 2 0 0 1 2 2v11.500a2 2 0 0 1-2 2h-5M5.500 11.500H22M9.500 4.500v5M18 4.500v5M5 18.500h7M9.500 15.500l3 3-3 3" /></Ico>
        </Slot>
        <span className="ml-auto mr-[9px] text-[13px] tracking-[-0.1px] whitespace-nowrap">05:23:27 UTC-7</span>
    </div>
);

const PaperTrading = () => (
    <div className="flex-1 rounded-t-[5px] bg-[#0f0f0f] flex items-center px-[7px] text-[#c4c4c4] [-webkit-text-stroke:0.3px]">
        <div className="relative size-[23px] rounded-[5px] bg-[#f2f2f2] flex items-center justify-center">
            <TvMark className="w-[15px] text-black" />
            <div className="absolute -right-[2px] -top-[2px] size-[6.500px] rounded-full bg-[#22a67c]" />
        </div>
        <span className="ml-[6px] mt-px w-[92px] text-[13px] tracking-[-0.500px] whitespace-nowrap">Paper Trading</span>
        <div className="w-[57px] h-[23px] rounded-[5px] border border-[#464646] text-[13px] tracking-[-0.400px] leading-[21px] text-center">Trade</div>
        <Ico box={18} className="ml-auto size-[18px]"><path d="M1 12.500L9 5.500l8 7" /></Ico>
        <Ico box={18} className="ml-[15px] mr-[2px] size-[18px]" sw={1.400}><path d="M1.500 6.500V4a2 2 0 0 1 2-2h11a2 2 0 0 1 2 2v2.500M1.500 11.500V14a2 2 0 0 0 2 2h11a2 2 0 0 0 2-2v-2.500" /></Ico>
    </div>
);

const Badge = ({ className, children }: { className: string; children: React.ReactNode }) => (
    <div className={`absolute h-[15px] rounded-full bg-[#dc2048] text-white text-[11px] leading-[15px] text-center [-webkit-text-stroke:0.3px] ${className}`}>{children}</div>
);

const SideSlot = ({ h, children }: { h: string; children?: React.ReactNode }) => (
    <div className={`relative ${h} pl-[2px] shrink-0 flex items-center justify-center`}>{children}</div>
);

const RightRail = () => (
    <div className="w-[42px] shrink-0 ml-auto rounded-tl-[5px] bg-[#0f0f0f] flex flex-col text-[#bfbfbf] overflow-hidden">
        <SideSlot h="h-[46px]"><Ico sw={1.300}><path d="M5 4h18.500v20.500L14 19l-9 5.500zM8.500 8.500h11M8.500 12h11M8.500 15.500h11" /></Ico></SideSlot>
        <SideSlot h="h-[39px]">
            <Ico sw={1.300}><circle cx="14" cy="14.500" r="10" /><path d="M14.500 9v6.500H9M2 7l4.500-4.500" /></Ico>
            <Badge className="left-[24px] top-[1px] w-[15px]">2</Badge>
        </SideSlot>
        <SideSlot h="h-[46px]"><Ico sw={1.300}><path d="M14 5l10.500 6.700L14 18.500 3.500 11.700zM3.500 16.500L14 23.300l10.500-6.800" /></Ico></SideSlot>
        <SideSlot h="h-[42px]"><Ico sw={1.300}><path d="M3.500 4h15a2 2 0 0 1 2 2v9a2 2 0 0 1-2 2h-9l-4 4.500V17h0a2 2 0 0 1-2-2zM20.500 9.500h2.500a2 2 0 0 1 2 2V24.500L21 21h-6.500a2 2 0 0 1-2-2v-2" /></Ico></SideSlot>
        <div className="h-[73px] shrink-0" />
        <SideSlot h="h-[40px]"><Ico sw={1.300}><circle cx="14" cy="14" r="13" /><circle cx="14" cy="14" r="7.300" /><circle cx="14" cy="14" r="1.500" fill="currentColor" /><path d="M14 14L23.500 5" /></Ico></SideSlot>
        <SideSlot h="h-[42px]"><Ico sw={1.300}><path d="M14.200 3.500L23 16l-3 2.500-5-5.500-3.500 2-2-2-4 2.500zM5 17l-3 7.500h24L22.500 19" /></Ico></SideSlot>
        <SideSlot h="h-[42px]"><Ico sw={1.300}><path d="M5.500 6H7M11 6h6M21 6h2a2 2 0 0 1 2 2v14.500a2 2 0 0 1-2 2H5a2 2 0 0 1-2-2V8a2 2 0 0 1 2-2M3 11.500h22" /><rect x="7" y="3.500" width="4" height="5" rx="1.500" /><rect x="17" y="3.500" width="4" height="5" rx="1.500" /></Ico></SideSlot>
        <SideSlot h="h-[43px]">
            <Ico sw={1.400}><circle cx="5.500" cy="23" r="2" /><path d="M3.500 15.500a9.500 9.500 0 0 1 9.500 9.500M3.500 10.500A14.500 14.500 0 0 1 18 25M3.500 5.500A19.500 19.500 0 0 1 23 25" /></Ico>
            <Badge className="left-[13px] top-[4px] w-[26px]">99+</Badge>
        </SideSlot>
        <SideSlot h="h-[42px]">
            <Ico sw={1.400}><path d="M5.500 20.500V14c0-5 3.500-9 8-9s8.500 4 8.500 9v6.500l2.500 2.500h-21zM11 23.500c.5 3 5.500 3 6 0" /></Ico>
            <Badge className="left-[24px] top-[4px] w-[15px]">3</Badge>
        </SideSlot>
        <SideSlot h="h-[45px]">
            <div className="size-[32px] rounded-full bg-[#f2f2f2] flex items-center justify-center">
                <div className="grid grid-cols-3 gap-[3px]">
                    {[0, 1, 2, 3, 4, 5, 6, 7, 8].map(i => <div key={i} className="size-[3.500px] bg-[#111]" />)}
                </div>
            </div>
        </SideSlot>
        <SideSlot h="h-[9px]"><div className="w-[32px] h-px bg-[#4a4a4a]" /></SideSlot>
        <SideSlot h="h-[45px]">
            <Ico sw={1.300}><circle cx="14" cy="14" r="13" /><path d="M9.500 11c0-6 9-6 9 0 0 3.500-4.500 3.500-4.500 7" /><circle cx="14" cy="20.800" r="1.200" /></Ico>
        </SideSlot>
    </div>
);

const Weather = () => (
    <div className="w-[273px] flex items-center">
        <div className="relative ml-[17px] w-[28px] h-[30px]">
            <svg viewBox="0 0 24 14" className="absolute left-0 top-[8px] w-[24px] h-[15px]">
                <defs><linearGradient id="cloud" x1="0" y1="0" x2="0" y2="1"><stop offset="0" stopColor="#e9f0ff" /><stop offset="1" stopColor="#9cb9ea" /></linearGradient></defs>
                <path d="M5 14a4.500 4.500 0 0 1-.5-9A7 7 0 0 1 17.500 5 4.800 4.800 0 0 1 19 14z" fill="url(#cloud)" />
            </svg>
            <div className="absolute left-[11px] -top-[2px] size-[15px] rounded-full bg-[#f28ba0] text-[#33161c] text-[10px] leading-[15px] text-center">1</div>
        </div>
        <div className="ml-[2px] text-[11.500px] leading-[15px] tracking-[-0.4px]">
            <div className="text-white">-1°C</div>
            <div className="text-[#b5b5b5]">Cloudy</div>
        </div>
    </div>
);

const Acrobat = () => (
    <div className="size-[21px] rounded-[4px] bg-[#8f0a0c] flex items-center justify-center text-white">
        <Ico box={16} className="size-[16px]" sw={1.400}><path d="M7.700 2c-.8 0-.5 3 .6 5.200C9.500 9.500 12 11.500 14 11c0-1.500-4-2-6.500-1.300C5 10.300 2.500 12 2.500 13 4 14 9.500 4 7.700 2z" /></Ico>
    </div>
);

const Taskbar = () => (
    <div className="h-[45px] shrink-0 bg-black flex items-center text-[#e0e0e0]">
        <Weather />
        <div className="grid grid-cols-2 gap-px size-[22px]">
            <div className="bg-[#5fd0fb]" /><div className="bg-[#4cc6fa]" /><div className="bg-[#3cbaf6]" /><div className="bg-[#27a9f0]" />
        </div>
        <div className="ml-[12px] w-[206px] h-[31px] rounded-full bg-[#262626] border-t border-[#3b3b3b] flex items-center">
            <Ico box={16} className="ml-[10px] size-[15px]" sw={1.700}><circle cx="7" cy="7" r="5.500" fill="#3d4145" /><path d="M11 11l4 4" /></Ico>
            <span className="ml-[9px] text-[13px] tracking-[-0.35px] text-[#b9b9b9]">Search</span>
        </div>
        <div className="ml-[1px] flex items-center">
            <Slot w="w-[41.25px]">
                <svg viewBox="0 0 24 22" className="w-[24px] h-[22px]">
                    <rect x="1" y="7" width="17" height="14" fill="#6a6a6a" /><rect x="6" y="1" width="18" height="15" fill="#f2f2f2" /><rect x="6" y="7" width="12" height="9" fill="#b5b5b5" />
                </svg>
            </Slot>
            <Slot w="w-[41.25px]">
                <svg viewBox="0 0 22 23" className="w-[22px] h-[23px]">
                    <path d="M6 5V1.500h10V5" fill="none" stroke="#36b3e6" strokeWidth="1.800" />
                    <rect x="0" y="4" width="22" height="19" rx="3" fill="#ededed" />
                    <rect x="7" y="9" width="3.700" height="3.700" fill="#e8512f" /><rect x="11.500" y="9" width="3.700" height="3.700" fill="#6fae2c" />
                    <rect x="7" y="13.500" width="3.700" height="3.700" fill="#2e9fe0" /><rect x="11.500" y="13.500" width="3.700" height="3.700" fill="#f4b71c" />
                </svg>
            </Slot>
            <Slot w="w-[41.25px]">
                <svg viewBox="0 0 22 20" className="w-[22px] h-[20px]">
                    <defs>
                        <linearGradient id="cp1" x1="0" y1="0" x2="0" y2="1"><stop offset="0" stopColor="#1e9be0" /><stop offset="0.500" stopColor="#35b56a" /><stop offset="1" stopColor="#e8c52a" /></linearGradient>
                        <linearGradient id="cp2" x1="0" y1="0" x2="0" y2="1"><stop offset="0" stopColor="#9a5be0" /><stop offset="0.500" stopColor="#e04a8c" /><stop offset="1" stopColor="#f08a4a" /></linearGradient>
                    </defs>
                    <path d="M6.500 0H14c2 0 2.500 1.500 3 4h-3.500c-2 0-2.500 1-3 3l-1.700 6c-.5 2-1.500 2.500-3 2.500H2.500C0 15.500-.3 13.500.5 11L3 3C3.700 1 4.500 0 6.500 0z" fill="url(#cp1)" />
                    <path d="M15.500 20H8c-2 0-2.500-1.500-3-4h3.500c2 0 2.500-1 3-3l1.700-6c.5-2 1.500-2.500 3-2.500h3.300c2.500 0 2.800 2 2 4.500L19 17c-.7 2-1.500 3-3.500 3z" fill="url(#cp2)" />
                </svg>
            </Slot>
            <Slot w="w-[41.25px]">
                <svg viewBox="0 0 22 22" className="size-[22px]">
                    <rect width="22" height="22" rx="4" fill="#1f5ae0" />
                    <path d="M4 17v-3l3-1.500V17zM8 17v-5l3-2v7zM12 17V9.500L15 8v9z" fill="#fff" />
                    <path d="M3.500 12L11 8l3-3 4.500-1.500" stroke="#cfdcff" fill="none" /><path d="M16 17V8l1.500-1v10z" fill="#fff" />
                </svg>
            </Slot>
            <Slot w="w-[41.25px]"><Acrobat /></Slot>
            <Slot w="w-[41.25px]">
                <svg viewBox="0 0 22 22" className="size-[21px]">
                    <circle cx="11" cy="11" r="11" fill="#f4f4f4" />
                    <path d="M6 7.500A5.500 5.500 0 0 1 13.500 4L8 11z" fill="#2f7de1" /><path d="M6 7a5.500 5.500 0 0 1 3-3l1 2-3 4z" fill="#e2412f" />
                    <path d="M13.500 4A5.500 5.500 0 0 1 16.500 9c0 4-3.500 5-5 10-1-2.500-2-4-3.500-6z" fill="#2fa653" />
                    <path d="M6 9c0 2 1 3 2.500 4.500L12 9.500 8 9z" fill="#f7b81c" /><circle cx="11.200" cy="8.700" r="2" fill="#f4f4f4" />
                </svg>
            </Slot>
            <Slot w="w-[41.25px]"><ChromeLogo className="size-[23px]" /></Slot>
            <Slot w="w-[41.25px]">
                <div className="w-[23px] h-[16px] rounded-[4px] bg-[#ee0f0f] flex items-center justify-center">
                    <svg viewBox="0 0 6 7" className="w-[6px] h-[7px]"><path d="M0 0l6 3.500L0 7z" fill="#fff" /></svg>
                </div>
            </Slot>
            <Slot w="w-[41.25px]">
                <div className="relative w-[37px] h-[37px] rounded-[5px] bg-[#161616] flex items-center justify-center">
                    <ChromeLogo className="size-[23px]" />
                    <div className="absolute right-[3px] top-[3px] size-[14px] rounded-full bg-[#4a575c] text-[9px] leading-[14px] text-center text-[#dcdcdc]">S</div>
                    <div className="absolute bottom-0 left-[11px] w-[15px] h-[3px] rounded-full bg-[#45aede]" />
                </div>
            </Slot>
            <Slot w="w-[41.25px]">
                <svg viewBox="0 0 24 24" className="size-[24px]">
                    <rect x="1" y="1" width="17" height="18" rx="2" fill="#ececec" />
                    <path d="M4 4h11M4 4v9M4 13h6M14.500 4v3" stroke="#c8201c" strokeWidth="2" strokeDasharray="2 1.200" fill="none" />
                    <path d="M17 6v11M9 15.500h10" stroke="#8d979c" strokeWidth="2.200" />
                    <circle cx="14.500" cy="20.800" r="2.200" fill="none" stroke="#2f86c6" strokeWidth="1.600" /><circle cx="21" cy="14.500" r="2.200" fill="none" stroke="#2f86c6" strokeWidth="1.600" />
                </svg>
            </Slot>
            <Slot w="w-[41.25px]">
                <div className="relative w-[24px] h-[37px] flex items-center justify-center">
                    <svg viewBox="0 0 24 24" className="size-[23px]">
                        <circle cx="12" cy="12" r="10.800" fill="#1d1d1d" stroke="#b5b5b5" strokeWidth="1.300" />
                        <path d="M12 4.500c-3 1-3.500 4.500-.5 7M5.500 16c.5-3.200 3-4.800 6.500-4M19 15.500c-2.700 1.800-6 .5-7-3.500" stroke="#b5b5b5" strokeWidth="2.800" strokeLinecap="round" fill="none" />
                    </svg>
                    <div className="absolute -right-[3px] top-[4px] size-[11px] rounded-full bg-[#f00d0d]" />
                    <div className="absolute bottom-0 left-[9px] w-[6px] h-[3px] rounded-full bg-[#8d8d8d]" />
                </div>
            </Slot>
        </div>
        <Ico box={10} className="ml-[65px] size-[10px]" sw={1.600}><path d="M.5 7.500L5 3l4.500 4.500" /></Ico>
        <Ico box={16} className="ml-[17px] size-[16px] text-[#79b8b5]" sw={1.300}><rect x="5.500" y="1" width="5" height="9" rx="2.500" fill="#2d4a4a" /><path d="M3 8a5 5 0 0 0 10 0M8 13v2.500" /></Ico>
        <div className="ml-[15px] w-[25px] text-[11.500px] leading-[15px] tracking-[-0.3px] text-center">ENG<br />US</div>
        <Ico box={16} className="ml-[15px] size-[16px]" sw={1.500}><path d="M1 6.500a10 10 0 0 1 14 0M3.300 9a6.800 6.800 0 0 1 9.400 0M5.500 11.300a3.800 3.800 0 0 1 5 0" /><circle cx="8" cy="13.200" r="1" fill="currentColor" /></Ico>
        <Ico box={16} className="ml-[6px] size-[16px]" sw={1.200}><path d="M1 6v4h2.500L7.500 13.500v-11L3.500 6zM10.500 6l4.500 4.500M15 6l-4.500 4.500" /></Ico>
        <svg viewBox="0 0 20 13" className="ml-[6px] w-[20px] h-[13px]">
            <rect x="0.700" y="2.700" width="16.500" height="9.300" rx="2.500" fill="#7ac074" stroke="#d3e8d0" strokeWidth="1.300" />
            <path d="M18.800 5.500v4" stroke="#d3e8d0" strokeWidth="1.600" /><path d="M9 0v7M6.500 4.500L9 7l2.500-2.500" stroke="#f2f2f2" strokeWidth="1.400" fill="none" />
        </svg>
        <div className="ml-auto mr-[17px] text-[11.500px] leading-[15px] tracking-[-0.3px] text-right whitespace-nowrap">5:23 AM<br />3/22/2026</div>
    </div>
);

const App: React.FC = () => {
    return (
        <div className={`w-[1280px] h-[720px] overflow-hidden flex flex-col bg-[#2e2e2e] ${UI}`}>
            <TabStrip />
            <AddressBar />
            <ChartHeader />
            <div className="flex-1 min-h-0 pt-[4px] flex bg-[#2e2e2e]">
                <LeftTools />
                <div className="w-[1181px] shrink-0 ml-[4px] flex flex-col gap-[4px]">
                    <div className="relative h-[514px] shrink-0 rounded-[5px] bg-[#0f0f0f] overflow-hidden">
                        <Chart />
                        <div className="absolute left-[8px] top-[30px] flex items-center text-white text-[12px] font-semibold text-center">
                            <div className="w-[58px] h-[32px] rounded-[5px] bg-[#e2224f] leading-[13px] pt-[3px] tracking-[-0.1px]">68,601<div className="text-[11px] font-medium tracking-[-0.300px] [-webkit-text-stroke:0.3px]">SELL</div></div>
                            <span className="w-[20px] text-[10px] text-[#cfcfcf]">1</span>
                            <div className="w-[57px] h-[32px] rounded-[5px] bg-[#2f60f4] leading-[13px] pt-[3px] tracking-[-0.1px]">68,602<div className="text-[11px] font-medium tracking-[-0.300px] [-webkit-text-stroke:0.3px]">BUY</div></div>
                        </div>
                        <div className="absolute left-[8px] top-[68px] w-[30px] h-[20px] rounded-[3px] border border-[#363636] bg-[#0f0f0f] flex items-center justify-center gap-[4px] text-[12px] text-[#cfcfcf] [-webkit-text-stroke:0.3px]">
                            <Chevron className="size-[9px]" />6
                        </div>
                        <FloatingBar />
                        <RangeBar />
                    </div>
                    <PaperTrading />
                </div>
                <RightRail />
            </div>
            <Taskbar />
        </div>
    );
};

export default App;
